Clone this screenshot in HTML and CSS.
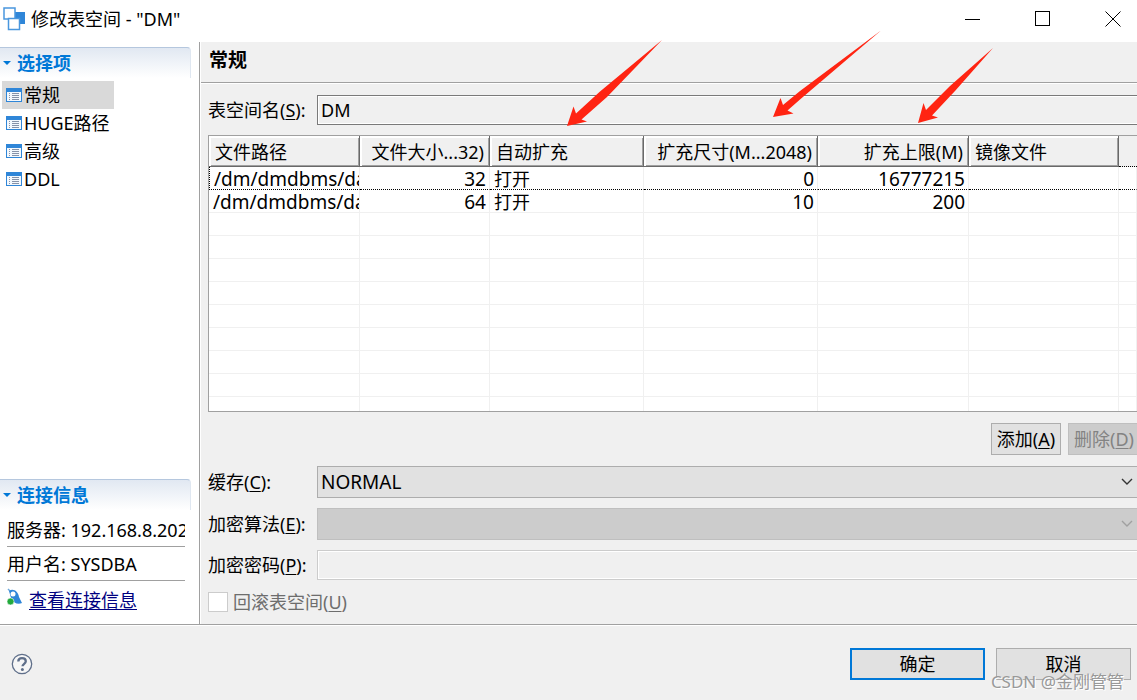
FILE: index.html
```html
<!DOCTYPE html>
<html lang="zh-CN">
<head>
  <meta charset="UTF-8">
  <title>修改表空间 - "DM"</title>
  <link rel="stylesheet" href="styles.css">
</head>
<body>

<svg class="defs" aria-hidden="true">
  <symbol id="icon-page" viewBox="0 0 16 14">
    <rect x="0.5" y="0.5" width="15" height="13" fill="#f3f8fd" stroke="#2f86d8"/>
    <rect x="0" y="0" width="16" height="4" fill="#2f86d8"/>
    <path d="M3 5.5h1M3 7.5h1M3 9.5h1M3 11.5h1M6 5.5h7M6 7.5h7M6 9.5h7M6 11.5h7" stroke="#8592a8"/>
  </symbol>
  <symbol id="icon-chevron" viewBox="0 0 12 8">
    <path d="M1 1l5 5 5-5" fill="none" stroke="currentColor" stroke-width="1.4"/>
  </symbol>
</svg>

<header class="titlebar">
  <svg class="app-icon" width="22" height="24" viewBox="0 0 22 24">
    <rect x="10" y="5" width="12" height="12" fill="#2f86d8"/>
    <rect x="1" y="1" width="11" height="11" fill="#fff" stroke="#4a97de" stroke-width="1.5"/>
    <rect x="5.5" y="11.5" width="11" height="11" fill="#fff" stroke="#4a97de" stroke-width="1.5"/>
  </svg>
  <h1>修改表空间 - "DM"</h1>
  <div class="window-controls">
    <button type="button" aria-label="最小化"><svg width="16" height="16"><path d="M0 8.5h15" stroke="#000"/></svg></button>
    <button type="button" aria-label="最大化"><svg width="16" height="16"><rect x="0.5" y="0.5" width="14" height="14" fill="none" stroke="#000"/></svg></button>
    <button type="button" aria-label="关闭"><svg width="16" height="16"><path d="M0.5 0.5l15 15M15.5 0.5l-15 15" stroke="#000"/></svg></button>
  </div>
</header>

<div class="main">
  <aside class="sidebar">
    <section>
      <h2 class="section-title">选择项</h2>
      <nav class="nav">
        <a class="active" href="#general"><svg width="16" height="14"><use href="#icon-page"/></svg>常规</a>
        <a href="#huge"><svg width="16" height="14"><use href="#icon-page"/></svg>HUGE路径</a>
        <a href="#advanced"><svg width="16" height="14"><use href="#icon-page"/></svg>高级</a>
        <a href="#ddl"><svg width="16" height="14"><use href="#icon-page"/></svg>DDL</a>
      </nav>
    </section>
    <section class="connection">
      <h2 class="section-title">连接信息</h2>
      <p>服务器: 192.168.8.202</p>
      <p>用户名: SYSDBA</p>
      <div class="connection-link">
        <svg width="16" height="18" viewBox="0 0 16 18">
          <path d="M1 1l2 2" stroke="#6ea9dc" stroke-width="1.5"/>
          <path d="M2 3C6 0 11 3 12 9l3 6c-4 2-9 0-11-5z" fill="#2f86d8"/>
          <circle cx="6" cy="6" r="2.5" fill="#fff"/>
          <circle cx="3.5" cy="13.5" r="3.5" fill="#22aa3c" stroke="#fff" stroke-width="0.6"/>
        </svg>
        <a href="#connection">查看连接信息</a>
      </div>
    </section>
  </aside>

  <main class="content">
    <h2 class="content-title">常规</h2>
    <form class="form">
      <div class="row">
        <label for="name">表空间名(<u>S</u>):</label>
        <input class="field" id="name" type="text" value="DM" readonly>
      </div>

      <div class="table-box">
        <table>
          <colgroup>
            <col class="col-path"><col class="col-size"><col class="col-auto"><col class="col-step"><col class="col-limit"><col class="col-mirror"><col>
          </colgroup>
          <thead>
            <tr>
              <th>文件路径</th>
              <th class="num">文件大小...32)</th>
              <th>自动扩充</th>
              <th class="num">扩充尺寸(M...2048)</th>
              <th class="num">扩充上限(M)</th>
              <th>镜像文件</th>
              <td></td>
            </tr>
          </thead>
          <tbody>
            <tr class="focused"><td class="latin">/dm/dmdbms/data</td><td class="latin num">32</td><td>打开</td><td class="latin num">0</td><td class="latin num">16777215</td><td></td><td></td></tr>
            <tr><td class="latin">/dm/dmdbms/data</td><td class="latin num">64</td><td>打开</td><td class="latin num">10</td><td class="latin num">200</td><td></td><td></td></tr>
            <tr><td></td><td></td><td></td><td></td><td></td><td></td><td></td></tr>
            <tr><td></td><td></td><td></td><td></td><td></td><td></td><td></td></tr>
            <tr><td></td><td></td><td></td><td></td><td></td><td></td><td></td></tr>
            <tr><td></td><td></td><td></td><td></td><td></td><td></td><td></td></tr>
            <tr><td></td><td></td><td></td><td></td><td></td><td></td><td></td></tr>
            <tr><td></td><td></td><td></td><td></td><td></td><td></td><td></td></tr>
            <tr><td></td><td></td><td></td><td></td><td></td><td></td><td></td></tr>
            <tr><td></td><td></td><td></td><td></td><td></td><td></td><td></td></tr>
            <tr><td></td><td></td><td></td><td></td><td></td><td></td><td></td></tr>
          </tbody>
        </table>
      </div>

      <div class="table-actions">
        <button class="btn" type="button">添加(<u>A</u>)</button>
        <button class="btn" type="button" disabled>删除(<u>D</u>)</button>
      </div>

      <div class="row">
        <label for="cache">缓存(<u>C</u>):</label>
        <div class="select">
          <select id="cache"><option>NORMAL</option><option>KEEP</option></select>
          <svg width="12" height="8"><use href="#icon-chevron"/></svg>
        </div>
      </div>
      <div class="row">
        <label for="algorithm">加密算法(<u>E</u>):</label>
        <div class="select">
          <select id="algorithm" disabled><option></option></select>
          <svg width="12" height="8"><use href="#icon-chevron"/></svg>
        </div>
      </div>
      <div class="row">
        <label for="password">加密密码(<u>P</u>):</label>
        <input class="field" id="password" type="password" disabled>
      </div>
      <div class="check">
        <input id="rollback" type="checkbox" disabled>
        <label for="rollback">回滚表空间(<u>U</u>)</label>
      </div>
    </form>
  </main>
</div>

<footer class="footer">
  <button class="help" type="button" aria-label="帮助">
    <svg width="22" height="22" viewBox="0 0 22 22">
      <circle cx="11" cy="11" r="9.7" fill="#f6f6f6" stroke="#5f6f8a" stroke-width="1.3"/>
      <path d="M7.3 8.6c0-2.2 1.6-3.4 3.7-3.4s3.8 1.2 3.8 3.1c0 2.4-3.3 2.6-3.3 5" fill="none" stroke="#5f6f8a" stroke-width="2.3"/>
      <circle cx="11.4" cy="16.4" r="1.5" fill="#5f6f8a"/>
    </svg>
  </button>
  <button class="btn wide primary" type="button">确定</button>
  <button class="btn wide" type="button">取消</button>
  <span class="watermark">CSDN @金刚管管</span>
</footer>

<!-- arrows pointing at the auto-extend columns -->
<svg class="arrows" width="1137" height="140" viewBox="0 0 1137 140" fill="#ff2412" aria-hidden="true">
  <path d="M567 126L573.5 106.5L576 113.5L600 91.5L662 40L607 97L581.5 119.5L587 121.5Z"/>
  <path d="M773 117L780.5 98L783 105L800 91L881 30.5L800 99.5L787.5 110.5L793.5 113.5Z"/>
  <path d="M918 123L923.5 103L926 110L950 86L993 48L955 91L932 115.5L938 117.5Z"/>
</svg>

</body>
</html>
```

FILE: styles.css
```css
* { box-sizing: border-box; }
body {
  margin: 0;
  min-height: 100vh;
  display: flex;
  flex-direction: column;
  position: relative;
  overflow-x: hidden;
  background-color: #f0f0f0;
  color: #000;
  font-family: "Noto Sans", "Noto Sans CJK SC", sans-serif;
  font-size: 18px;
  line-height: 24px;
}
h1, h2, p { margin: 0; }
button, input, select { font: inherit; color: inherit; }
u { text-underline-offset: 2px; text-decoration-thickness: 1px; }
.defs { position: absolute; width: 0; height: 0; }

/* title bar */
.titlebar {
  display: flex;
  align-items: center;
  height: 42px;
  padding-left: 3px;
  padding-bottom: 4px;
  background-color: #fff;
}
.titlebar h1 {
  margin-left: 6px;
  font-size: 18px;
  font-weight: normal;
}
.window-controls { display: flex; margin-left: auto; }
.window-controls button {
  display: flex;
  justify-content: center;
  width: 70px;
  padding: 0;
  border: none;
  background: none;
}
.window-controls button:last-child { margin-right: -11px; }

/* sidebar */
.main { display: flex; flex: 1; }
.sidebar {
  display: flex;
  flex-direction: column;
  flex: 0 0 200px;
  min-width: 0;
  padding-top: 5px;
  overflow: hidden;
  background-color: #fff;
  border-right: 1px solid #a0a0a0;
}
.section-title {
  display: flex;
  align-items: center;
  width: 191px;
  height: 31px;
  padding-left: 3px;
  border-top: 1px solid #b5c7de;
  border-right: 1px solid #dfe7f1;
  border-top-right-radius: 4px;
  background: linear-gradient(#e1e8f2, #fff);
  color: #0078d7;
  font-size: 18px;
  font-weight: bold;
}
.section-title::before {
  content: "";
  margin-right: 6px;
  border: 4px solid transparent;
  border-top-color: #0078d7;
  border-bottom: none;
}
.nav { padding: 3px 0 0 2px; }
.nav a {
  display: flex;
  align-items: center;
  gap: 2px;
  width: 112px;
  height: 28px;
  padding-left: 4px;
  color: #000;
  text-decoration: none;
}
.nav a.active { background-color: #d9d9d9; }
.connection { margin-top: auto; }
.connection p {
  height: 34px;
  margin: 0 14px 0 7px;
  padding-top: 5px;
  border-bottom: 1px solid #a0a0a0;
  white-space: nowrap;
  overflow: hidden;
}
.connection .section-title { margin-bottom: 3px; }
.connection-link {
  display: flex;
  gap: 6px;
  height: 43px;
  padding: 7px 0 0 7px;
}
.connection-link a { color: #000080; text-underline-offset: 2px; }

/* content */
.content {
  flex: 1;
  min-width: 0;
  border-left: 1px solid #fff;
}
.content-title {
  height: 41px;
  padding: 6px 8px;
  border-bottom: 1px solid #a0a0a0;
  font-size: 19px;
}
.form {
  display: flex;
  flex-direction: column;
  gap: 10px;
  padding: 11px 0 6px 7px;
  border-top: 1px solid #fff;
}
.row {
  display: grid;
  grid-template-columns: 109px 1fr;
  align-items: center;
}
.field {
  width: 100%;
  height: 30px;
  padding: 0 3px;
  border: 1px solid #7a7a7a;
  border-right: none;
  box-shadow: inset 0 1px #fff, inset 0 -1px #fff, inset 1px 0 #fff;
  background-color: #f0f0f0;
}
.field:disabled { border-color: #ccc; }
.select { position: relative; }
.select select {
  appearance: none;
  display: block;
  width: 100%;
  height: 32px;
  padding: 0 3px;
  border: 1px solid #adadad;
  border-right: none;
  border-radius: 0;
  background-color: #e1e1e1;
  font-size: 19px;
}
.select svg {
  position: absolute;
  right: 4px;
  top: 12px;
  color: #333;
  pointer-events: none;
}
.select select:disabled {
  border-color: #bfbfbf;
  background-color: #ccc;
  opacity: 1;
}
.select select:disabled + svg { color: #a0a0a0; }

/* file table */
.table-box {
  height: 277px;
  overflow: hidden;
  border: 1px solid #a0a0a0;
  border-right: none;
  background-color: #fff;
}
table {
  width: 100%;
  table-layout: fixed;
  border-collapse: separate;
  border-spacing: 0;
}
.col-path, .col-limit { width: 151px; }
.col-size { width: 130px; }
.col-auto { width: 154px; }
.col-step { width: 174px; }
.col-mirror { width: 150px; }
th, td {
  overflow: hidden;
  white-space: nowrap;
  text-align: left;
  font-weight: normal;
}
thead th, thead td {
  height: 31px;
  padding: 1px 5px 0 6px;
  border-right: 1px solid #696969;
  border-bottom: 1px solid #696969;
  background-color: #f0f0f0;
  box-shadow: inset 2px 2px #fff, inset -1px -1px #a0a0a0;
}
thead td {
  border-right: none;
  border-bottom: 1px dotted #000;
  box-shadow: none;
}
tbody td {
  height: 23px;
  padding: 2px 3px 0 4px;
  border-right: 1px solid #f0f0f0;
  border-bottom: 1px solid #f0f0f0;
  line-height: 20px;
}
.latin { font-size: 19px; }
.num { text-align: right; }
.focused td { border-bottom: 1px dotted #000; }
.focused td:first-child { border-left: 1px dotted #000; }

/* buttons */
.table-actions {
  display: flex;
  justify-content: flex-end;
  gap: 7px;
  padding: 1px 0;
}
.btn {
  height: 32px;
  padding: 0 5px;
  border: 1px solid #adadad;
  background-color: #e1e1e1;
  white-space: nowrap;
}
.btn:disabled {
  padding-right: 3px;
  border-color: #bfbfbf;
  border-right: none;
  background-color: #ccc;
  color: #838383;
}
.btn.wide { width: 135px; }
.btn.primary { border: 2px solid #0078d7; }
.check {
  display: flex;
  align-items: center;
  gap: 5px;
  color: #6d6d6d;
}
.check input {
  appearance: none;
  width: 20px;
  height: 20px;
  margin: 0;
  border: 1px solid #ccc;
  background-color: #fff;
}

/* footer */
.footer {
  display: flex;
  align-items: center;
  flex-shrink: 0;
  gap: 11px;
  position: relative;
  height: 76px;
  padding: 2px 6px 0 11px;
  border-top: 1px solid #a0a0a0;
  box-shadow: inset 0 1px #fff;
}
.help {
  display: flex;
  margin-right: auto;
  padding: 0;
  border: none;
  background: none;
}
.watermark {
  position: absolute;
  right: 13px;
  bottom: 6px;
  color: #999;
  font-size: 17px;
  text-shadow: 1px 1px #fff;
}
.arrows {
  position: absolute;
  top: 0;
  left: 0;
  pointer-events: none;
}
```
